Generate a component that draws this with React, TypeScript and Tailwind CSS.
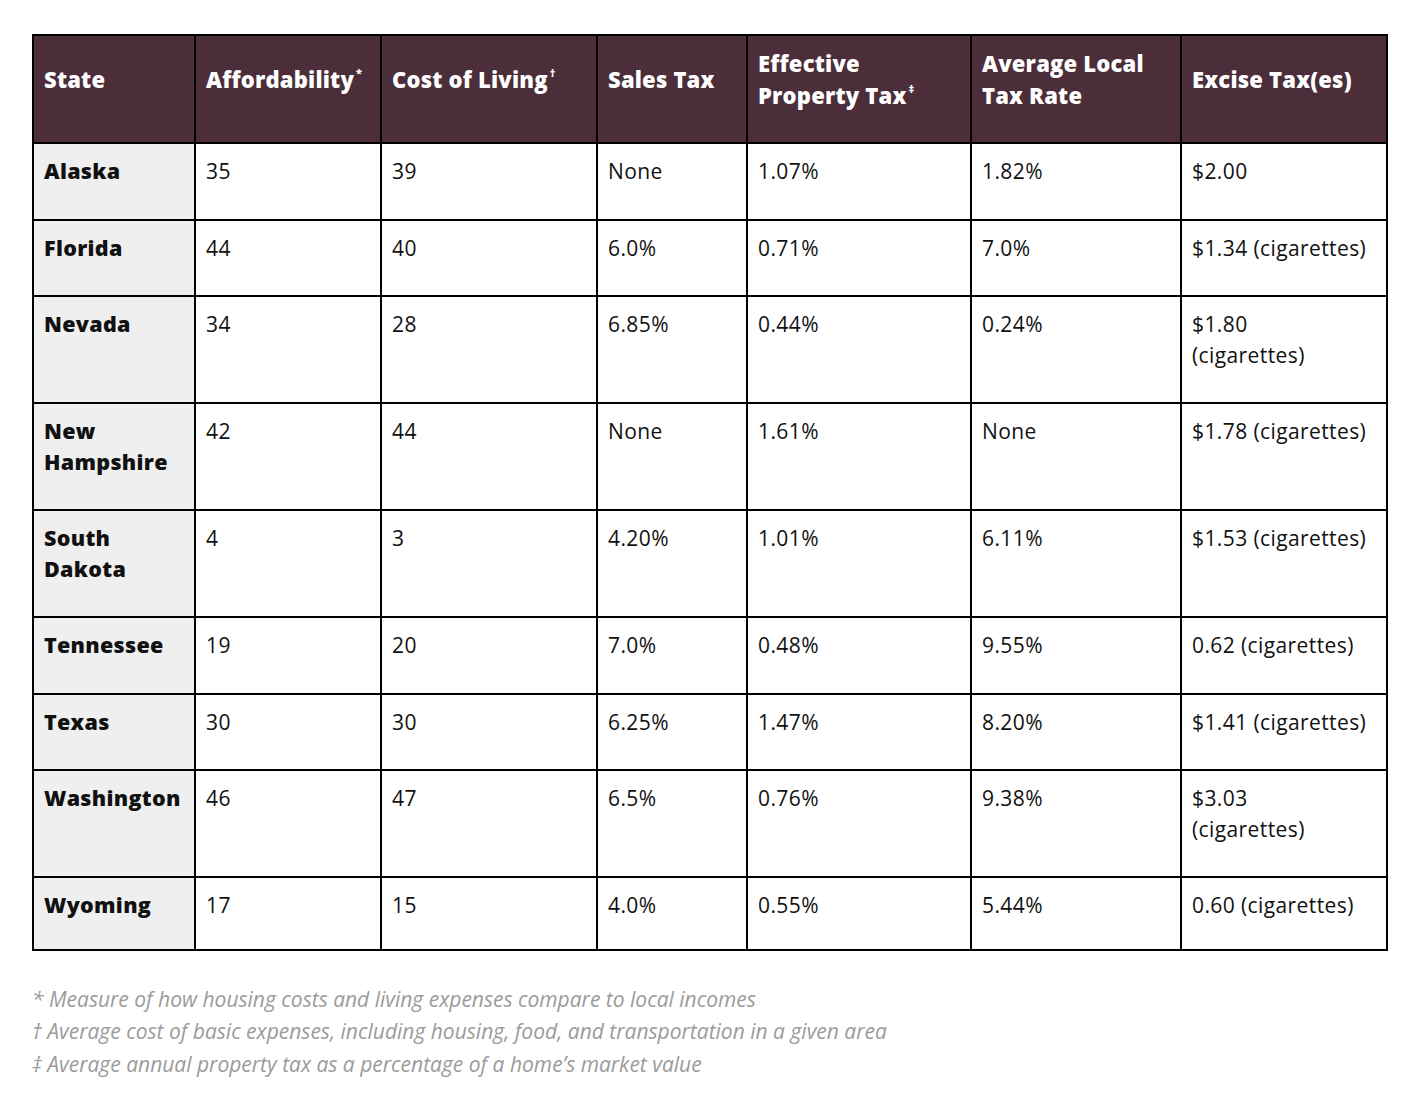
const rows: string[][] = [
  ["Alaska", "35", "39", "None", "1.07%", "1.82%", "$2.00"],
  ["Florida", "44", "40", "6.0%", "0.71%", "7.0%", "$1.34 (cigarettes)"],
  ["Nevada", "34", "28", "6.85%", "0.44%", "0.24%", "$1.80\n(cigarettes)"],
  ["New\nHampshire", "42", "44", "None", "1.61%", "None", "$1.78 (cigarettes)"],
  ["South\nDakota", "4", "3", "4.20%", "1.01%", "6.11%", "$1.53 (cigarettes)"],
  ["Tennessee", "19", "20", "7.0%", "0.48%", "9.55%", "0.62 (cigarettes)"],
  ["Texas", "30", "30", "6.25%", "1.47%", "8.20%", "$1.41 (cigarettes)"],
  ["Washington", "46", "47", "6.5%", "0.76%", "9.38%", "$3.03\n(cigarettes)"],
  ["Wyoming", "17", "15", "4.0%", "0.55%", "5.44%", "0.60 (cigarettes)"],
];

const widths = [162, 186, 216, 150, 224, 210, 206];

function Sup({ children }: { children: React.ReactNode }) {
  return <span className="text-[11px] align-top relative top-[-6px] ml-[2px]">{children}</span>;
}

export default function App() {
  const heads: React.ReactNode[] = [
    "State",
    <>Affordability<Sup>*</Sup></>,
    <>Cost of Living<Sup>†</Sup></>,
    "Sales Tax",
    <>Effective<br />Property Tax<Sup>‡</Sup></>,
    <>Average Local<br />Tax Rate</>,
    "Excise Tax(es)",
  ];

  return (
    <div className="bg-white min-h-screen pl-[32px] pt-[34px] pr-[32px] font-['Open_Sans',sans-serif] text-[#111]">
      <table className="table-fixed border-collapse border-2 border-black w-[1356px]">
        <colgroup>
          {widths.map((w, i) => (
            <col key={i} style={{ width: w }} />
          ))}
        </colgroup>
        <thead>
          <tr className="bg-[#4b2e3a] h-[108px]">
            {heads.map((h, i) => (
              <th
                key={i}
                className="border-2 border-black text-left align-middle px-[10px] pb-[20px] text-white text-[22px] leading-[32px] font-extrabold whitespace-nowrap tracking-[0.2px]"
              >
                {h}
              </th>
            ))}
          </tr>
        </thead>
        <tbody>
          {rows.map((r, ri) => (
            <tr key={r[0]}>
              {r.map((c, i) => (
                <td
                  key={i}
                  className={`border-2 border-black align-top px-[10px] pt-[12px] leading-[30.5px] whitespace-pre-line ${
                    ri === rows.length - 1 ? "pb-[28px]" : "pb-[32px]"
                  } ${i === 0 ? "bg-[#efefef] font-extrabold text-[21.5px] tracking-[0.3px]" : "bg-white text-[21px] tracking-[0.4px]"}`}
                >
                  {c}
                </td>
              ))}
            </tr>
          ))}
        </tbody>
      </table>
      <div className="mt-[32px] italic text-[21px] leading-[32.5px] text-[#9b9b9b]">
        <p>* Measure of how housing costs and living expenses compare to local incomes</p>
        <p>† Average cost of basic expenses, including housing, food, and transportation in a given area</p>
        <p>‡ Average annual property tax as a percentage of a home’s market value</p>
      </div>
    </div>
  );
}
